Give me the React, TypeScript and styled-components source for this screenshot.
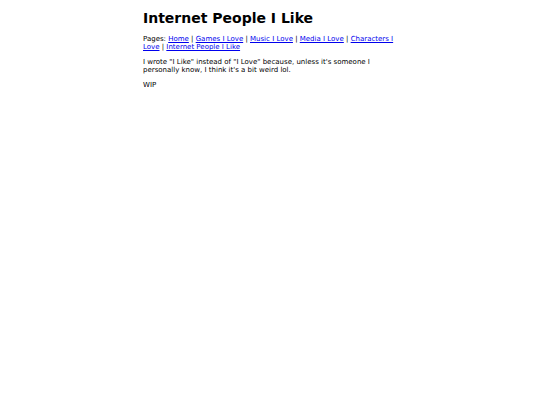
import { createGlobalStyle } from 'styled-components';
import styled from 'styled-components';

const GlobalStyle = createGlobalStyle`
  body {
    margin: 0;
    background: #ffffff;
    color: #000000;
    font-family: "DejaVu Sans", Verdana, sans-serif;
  }
`;

const Page = styled.main`
  width: 254px;
  margin: 0 auto;
  padding-top: 10px;
  font-size: 7px;
  line-height: 8px;
`;

const Title = styled.h1`
  font-size: 14px;
  line-height: 16px;
  font-weight: bold;
  margin: 0 0 9px;
`;

const Para = styled.p`
  margin: 0 0 7px;
`;

const NavLink = styled.a`
  color: #0000ee;
  text-decoration: underline;
`;

const pages = [
  'Home',
  'Games I Love',
  'Music I Love',
  'Media I Love',
  'Characters I Love',
  'Internet People I Like',
];

export default function App() {
  return (
    <>
      <GlobalStyle />
      <Page>
        <Title>Internet People I Like</Title>
        <Para>
          Pages:{' '}
          {pages.map((p, i) => (
            <span key={p}>
              {i > 0 && ' | '}
              <NavLink href="#">{p}</NavLink>
            </span>
          ))}
        </Para>
        <Para>
          I wrote "I Like" instead of "I Love" because, unless it's someone I
          personally know, I think it's a bit weird lol.
        </Para>
        <Para>WIP</Para>
      </Page>
    </>
  );
}
